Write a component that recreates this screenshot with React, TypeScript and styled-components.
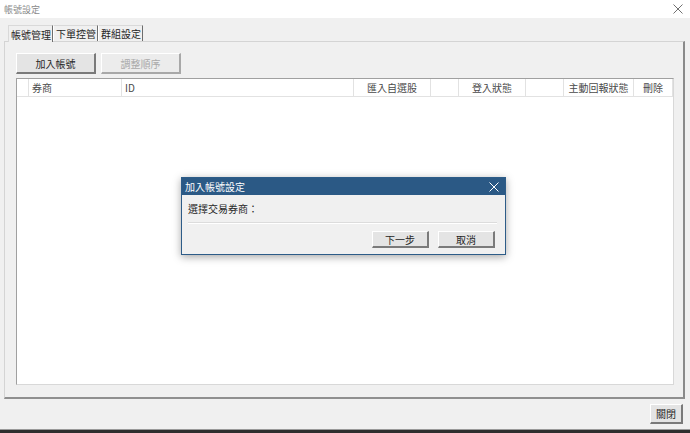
import styled, { createGlobalStyle } from 'styled-components';

const GlobalStyle = createGlobalStyle`
  html, body { margin: 0; padding: 0; }
  body {
    width: 690px;
    height: 433px;
    overflow: hidden;
    font-family: "Noto Sans CJK TC", "Noto Sans", sans-serif;
    font-size: 10px;
    color: #262626;
  }
`;

const Window = styled.div`
  position: relative;
  width: 690px;
  height: 433px;
  display: flex;
  flex-direction: column;
  background: #f0f0f0;
  overflow: hidden;
`;

const TitleBar = styled.div`
  height: 18px;
  flex: none;
  background: #ffffff;
  display: flex;
  align-items: center;
  justify-content: space-between;
  padding: 0 7px 0 4px;
  color: #8a8a8a;
  font-size: 9px;
`;

const CloseGlyph = styled.svg`
  display: block;
`;

const Body = styled.div`
  flex: 1;
  display: flex;
  flex-direction: column;
  padding: 6px 4px 0 4px;
  min-height: 0;
`;

const TabStrip = styled.div`
  display: flex;
  height: 17px;
  padding-left: 4px;
  align-items: flex-end;
`;

const Tab = styled.div<{ $active?: boolean }>`
  height: ${(p) => (p.$active ? 17 : 16)}px;
  padding: 0 1px 0 2px;
  display: flex;
  align-items: center;
  font-size: 10px;
  background: #f0f0f0;
  border-top: 1px solid #d9d9d9;
  border-left: 1px solid ${(p) => (p.$active ? '#d9d9d9' : '#ffffff')};
  border-right: 1px solid #6d6d6d;
  margin-bottom: ${(p) => (p.$active ? -1 : 0)}px;
  box-sizing: border-box;
  position: relative;
  z-index: ${(p) => (p.$active ? 1 : 0)};
`;

const Panel = styled.div`
  height: 358px;
  box-sizing: border-box;
  border: 1px solid #d4d4d4;
  border-right: 2px solid #8a8a8a;
  border-bottom: 2px solid #8f8f8f;
  margin-right: 1px;
  padding: 11px 9px 12px 11px;
  display: flex;
  flex-direction: column;
  gap: 4px;
`;

const ButtonRow = styled.div`
  display: flex;
  gap: 5px;
`;

const Button = styled.div<{ $w: number; $h: number; $disabled?: boolean }>`
  width: ${(p) => p.$w}px;
  height: ${(p) => p.$h}px;
  box-sizing: border-box;
  display: flex;
  align-items: center;
  justify-content: center;
  background: ${(p) => (p.$disabled ? '#ececec' : '#e4e4e4')};
  border: 1px solid #ffffff;
  border-right: 2px solid ${(p) => (p.$disabled ? '#a8a8a8' : '#7a7a7a')};
  border-bottom: 2px solid ${(p) => (p.$disabled ? '#a8a8a8' : '#7a7a7a')};
  color: ${(p) => (p.$disabled ? '#a9a9a9' : '#262626')};
  font-size: 10px;
`;

const Table = styled.div`
  flex: 1;
  background: #ffffff;
  border: 1px solid #a0a0a0;
  border-right-color: #d8d8d8;
  border-bottom-color: #d8d8d8;
`;

const HeaderRow = styled.div`
  display: flex;
  height: 17px;
  border-bottom: 1px solid #e2e2e2;
`;

const HeaderCell = styled.div<{ $w: number; $align?: string }>`
  width: ${(p) => p.$w}px;
  flex: none;
  box-sizing: border-box;
  border-right: 1px solid #e2e2e2;
  display: flex;
  align-items: center;
  justify-content: ${(p) => p.$align || 'flex-start'};
  padding: 0 3px;
  font-size: 10px;
  color: #4a4a4a;
`;

const Footer = styled.div`
  height: 29px;
  display: flex;
  justify-content: flex-end;
  align-items: center;
  padding-right: 3px;
`;

const Taskbar = styled.div`
  height: 4px;
  flex: none;
  background: linear-gradient(to bottom, #9a9a9a 0, #9a9a9a 1px, #2e2e2e 1px);
`;

const Dialog = styled.div`
  position: absolute;
  left: 181px;
  top: 177px;
  width: 325px;
  height: 78px;
  box-sizing: border-box;
  background: #f0f0f0;
  border: 1px solid #2d5c88;
  box-shadow: 0 2px 8px rgba(0, 0, 0, 0.35);
  display: flex;
  flex-direction: column;
`;

const DialogTitle = styled.div`
  height: 17px;
  background: #2b5985;
  color: #ffffff;
  display: flex;
  align-items: center;
  justify-content: space-between;
  padding: 0 6px 0 3px;
  font-size: 10px;
`;

const DialogBody = styled.div`
  flex: 1;
  padding: 7px 8px 0 6px;
  display: flex;
  flex-direction: column;
`;

const Label = styled.div`
  font-size: 10px;
  height: 14px;
  line-height: 14px;
`;

const Separator = styled.div`
  margin-top: 6px;
  height: 1px;
  background: #dcdcdc;
  border-bottom: 1px solid #ffffff;
`;

const DialogButtons = styled.div`
  display: flex;
  justify-content: flex-end;
  gap: 9px;
  margin-top: 7px;
  padding-right: 2px;
`;

const columns = [
  { w: 12, label: '' },
  { w: 93, label: '券商' },
  { w: 232, label: 'ID' },
  { w: 77, label: '匯入自選股', align: 'center' },
  { w: 28, label: '' },
  { w: 67, label: '登入狀態', align: 'center' },
  { w: 38, label: '' },
  { w: 70, label: '主動回報狀態', align: 'center' },
  { w: 39, label: '刪除', align: 'center' },
];

const Cross = ({ size, color }: { size: number; color: string }) => (
  <CloseGlyph width={size} height={size} viewBox="0 0 10 10">
    <path d="M0.5 0.5 L9.5 9.5 M9.5 0.5 L0.5 9.5" stroke={color} strokeWidth="1" />
  </CloseGlyph>
);

export default function App() {
  return (
    <Window>
      <GlobalStyle />
      <TitleBar>
        <span>帳號設定</span>
        <Cross size={10} color="#707070" />
      </TitleBar>
      <Body>
        <TabStrip>
          <Tab $active>帳號管理</Tab>
          <Tab>下單控管</Tab>
          <Tab>群組設定</Tab>
        </TabStrip>
        <Panel>
          <ButtonRow>
            <Button $w={80} $h={21}>加入帳號</Button>
            <Button $w={80} $h={21} $disabled>調整順序</Button>
          </ButtonRow>
          <Table>
            <HeaderRow>
              {columns.map((c, i) => (
                <HeaderCell key={i} $w={c.w} $align={c.align}>
                  {c.label}
                </HeaderCell>
              ))}
            </HeaderRow>
          </Table>
        </Panel>
        <Footer>
          <Button $w={33} $h={20}>關閉</Button>
        </Footer>
      </Body>
      <Taskbar />
      <Dialog>
        <DialogTitle>
          <span>加入帳號設定</span>
          <Cross size={10} color="#ffffff" />
        </DialogTitle>
        <DialogBody>
          <Label>選擇交易券商：</Label>
          <Separator />
          <DialogButtons>
            <Button $w={57} $h={17}>下一步</Button>
            <Button $w={57} $h={17}>取消</Button>
          </DialogButtons>
        </DialogBody>
      </Dialog>
    </Window>
  );
}
